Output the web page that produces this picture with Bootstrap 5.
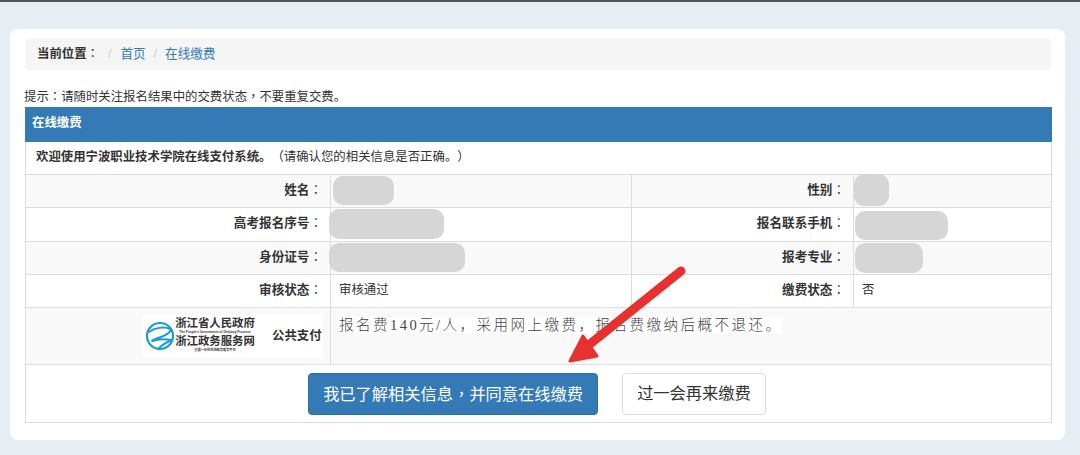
<!DOCTYPE html>
<html lang="zh">
<head>
<meta charset="utf-8">
<title>在线缴费</title>
<link href="https://cdn.jsdelivr.net/npm/bootstrap@5.3.0/dist/css/bootstrap.min.css" rel="stylesheet">
<style>
html,body{height:455px;overflow:hidden}
body{background:#e6eef3;border-top:2px solid #50585e;font-family:"Liberation Sans","Noto Sans CJK SC",sans-serif;font-size:12.4px;color:#333;position:relative;text-spacing-trim:space-all}
.pn{font-family:"Noto Sans CJK TC",sans-serif;font-weight:400}
.pay-sheet{margin:27px 15px 0 10px;height:411px;background:#fff;border-radius:8px;padding:9px 14px 0 15px}
.crumb-bar{background:#f5f5f5;height:32px;border-radius:4px;padding:0 12px;margin-bottom:18px;line-height:30px;color:#ccc}
.crumb-bar strong{color:#333;margin-right:9px}
.crumb-bar a{color:#337ab7;text-decoration:none;font-size:12.6px}
.crumb-bar .sep{margin:0 8px}
.crumb-bar .sep-first{margin:0 9px 0 0}
.tip-line{height:19px;line-height:17px;margin:0 0 0 -1px;white-space:nowrap}
.pay-table{width:1026px;table-layout:fixed;border-collapse:collapse;margin:0}
.pay-table td{border:1px solid #ddd;padding:0 8px 3px;vertical-align:middle;height:33.3px;line-height:18px}
.pay-table .c1{width:305px}.pay-table .c2{width:301px}.pay-table .c3{width:222px}.pay-table .c4{width:198px}
.pay-table td.lab{text-align:right;font-weight:700;padding-right:8px;font-size:12.6px}
.pay-table tr.striped td{background:#f9f9f9}
.pay-table td.head{background:#337ab7;color:#fff;font-weight:700;border-color:#337ab7;height:34px;padding-left:6px}
.pay-table td.welcome{padding-left:10px;height:33px}
.pay-table td.notice-cell{height:57px;vertical-align:top;padding:9px 8px 0 7px}
.pay-table td.brand-cell{height:57px;padding:7px 7px 0 117px;vertical-align:top}
.pay-table td.act-cell{height:58px;text-align:center;padding:0}
.gov-brand{width:180px;height:42px;background:#fff;display:flex;align-items:center;padding-left:2px}
.gov-brand svg{flex:none}
.gov-words{margin-left:-3px;width:86px;text-align:center;font-family:"Liberation Serif","Noto Sans CJK SC",serif;font-weight:700;color:#333;line-height:1}
.gov-big{font-size:11.4px;display:block;white-space:nowrap;height:13px}
.gov-tiny{font-size:3.2px;display:block;height:5px;white-space:nowrap;font-family:"Liberation Sans","Noto Sans CJK SC",sans-serif}
.gov-tag{margin-left:14px;font-size:12.4px;font-weight:700;white-space:nowrap;color:#333}
.fee-notice{display:inline-block;background:#fff;height:17px;line-height:17px;font-family:"Liberation Serif","Noto Sans CJK SC",serif;font-size:14.6px;letter-spacing:2.4px;color:#444;white-space:nowrap;font-weight:300;padding-left:1px;width:444px}
.act-row{display:flex;justify-content:center;gap:24px;margin-left:-3px}
.act-go,.act-later{font-size:16.25px;height:42px;padding:0 14px;line-height:39px;border-radius:4px}
.act-go{background:#337ab7;border-color:#2e6da4;color:#fff}
.act-later{background:#fff;border-color:#ddd;color:#333}
.mask-blob{position:absolute;background:#d6d6d6;border-radius:10px}
.m1{left:333px;top:174px;width:61px;height:29px}
.m2{left:329px;top:207px;width:115px;height:30px}
.m3{left:329px;top:241px;width:136px;height:29px}
.m4{left:854px;top:172px;width:35px;height:32px}
.m5{left:855px;top:209px;width:93px;height:29px}
.m6{left:855px;top:241px;width:68px;height:30px}
.arrow-mark{position:absolute;left:0;top:0;pointer-events:none}
</style>
</head>
<body>
<div class="pay-sheet">
  <nav class="crumb-bar"><strong>当前位置<span class="pn" lang="zh-Hant">：</span></strong><span class="sep-first">/</span><a href="#">首页</a><span class="sep">/</span><a href="#">在线缴费</a></nav>
  <p class="tip-line">提示<span class="pn" lang="zh-Hant">：</span>请随时关注报名结果中的交费状态<span class="pn" lang="zh-Hant">，</span>不要重复交费。</p>
  <table class="pay-table">
    <colgroup><col class="c1"><col class="c2"><col class="c3"><col class="c4"></colgroup>
    <tbody>
      <tr><td class="head" colspan="4">在线缴费</td></tr>
      <tr><td class="welcome" colspan="4"><strong>欢迎使用宁波职业技术学院在线支付系统。</strong>（请确认您的相关信息是否正确。）</td></tr>
      <tr class="striped"><td class="lab">姓名<span class="pn" lang="zh-Hant">：</span></td><td></td><td class="lab">性别<span class="pn" lang="zh-Hant">：</span></td><td></td></tr>
      <tr><td class="lab">高考报名序号<span class="pn" lang="zh-Hant">：</span></td><td></td><td class="lab">报名联系手机<span class="pn" lang="zh-Hant">：</span></td><td></td></tr>
      <tr class="striped"><td class="lab">身份证号<span class="pn" lang="zh-Hant">：</span></td><td></td><td class="lab">报考专业<span class="pn" lang="zh-Hant">：</span></td><td></td></tr>
      <tr><td class="lab">审核状态<span class="pn" lang="zh-Hant">：</span></td><td>审核通过</td><td class="lab">缴费状态<span class="pn" lang="zh-Hant">：</span></td><td>否</td></tr>
      <tr class="striped">
        <td class="brand-cell">
          <div class="gov-brand">
            <svg width="30" height="32" viewBox="0 0 30 32" aria-hidden="true">
              <circle cx="15" cy="16" r="13" fill="none" stroke="#1b9ad6" stroke-width="2.2"/>
              <path d="M4 12c5-4 15-6 21-3 2 2-3 6-9 8-3 1-7 2-9 4 6-2 14-2 20-1-5 2-10 5-14 9" fill="none" stroke="#1b9ad6" stroke-width="2" stroke-linecap="round" stroke-linejoin="round"/>
            </svg>
            <div class="gov-words">
              <span class="gov-big">浙江省人民政府</span>
              <span class="gov-tiny">The People's Government of Zhejiang Province</span>
              <span class="gov-big">浙江政务服务网</span>
              <span class="gov-tiny">全国一体化在线政务服务平台</span>
            </div>
            <span class="gov-tag">公共支付</span>
          </div>
        </td>
        <td class="notice-cell" colspan="3"><span class="fee-notice">报名费140元/人，采用网上缴费，报名费缴纳后概不退还。</span></td>
      </tr>
      <tr><td class="act-cell" colspan="4">
        <div class="act-row">
          <a href="#" class="btn act-go">我已了解相关信息<span class="pn" lang="zh-Hant">，</span>并同意在线缴费</a>
          <a href="#" class="btn act-later">过一会再来缴费</a>
        </div>
      </td></tr>
    </tbody>
  </table>
</div>
<div class="mask-blob m1"></div><div class="mask-blob m2"></div><div class="mask-blob m3"></div>
<div class="mask-blob m4"></div><div class="mask-blob m5"></div><div class="mask-blob m6"></div>
<svg class="arrow-mark" width="1080" height="453" viewBox="0 2 1080 453" aria-hidden="true">
  <path d="M681 271L590 344" stroke="#e8312f" stroke-width="9" stroke-linecap="round" fill="none"/>
  <path d="M570 361L583 336L597 356Z" fill="#e8312f" stroke="#e8312f" stroke-width="3" stroke-linejoin="round"/>
</svg>
</body>
</html>
